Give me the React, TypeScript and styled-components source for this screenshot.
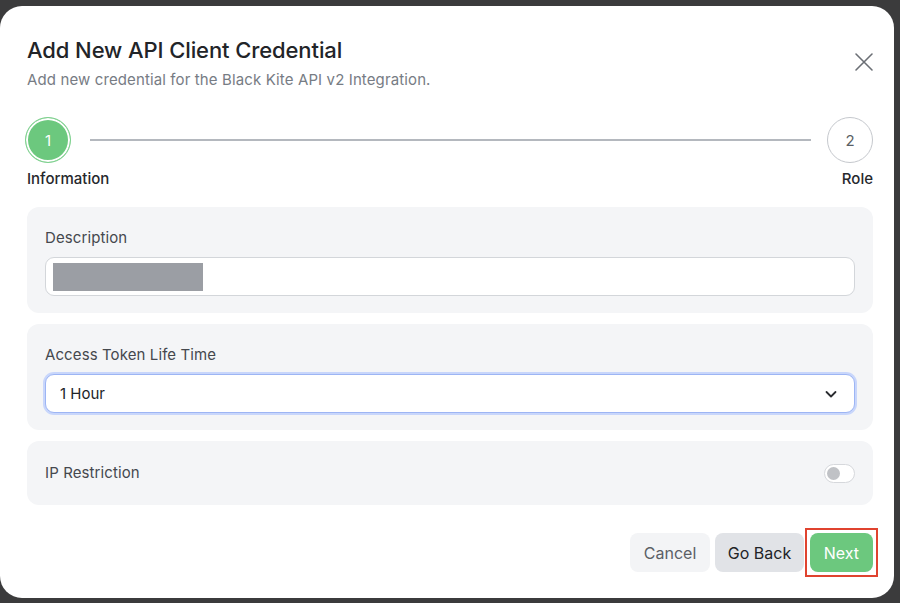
import styled, { createGlobalStyle } from "styled-components";

const GlobalStyle = createGlobalStyle`
  html, body {
    margin: 0;
    padding: 0;
    background: #3b3b3c;
  }
  body {
    font-family: Inter, "Noto Sans", sans-serif;
    width: 900px;
    height: 603px;
    overflow: hidden;
  }
`;

const Modal = styled.div`
  margin-top: 6px;
  width: 894px;
  height: 592px;
  box-sizing: border-box;
  background: #fff;
  border-radius: 22px;
  padding: 30px 21px 0 27px;
  display: flex;
  flex-direction: column;
`;

const Header = styled.div`
  display: flex;
  justify-content: space-between;
  align-items: flex-start;
`;

const Title = styled.h1`
  margin: 0;
  font-size: 22px;
  font-weight: 500;
  color: #222428;
  line-height: 28px;
  letter-spacing: -0.1px;
`;

const Subtitle = styled.p`
  margin: 6px 0 0;
  font-size: 15px;
  color: #777c84;
  line-height: 20px;
  letter-spacing: 0.12px;
`;

const CloseButton = styled.button`
  border: none;
  background: none;
  padding: 0;
  margin: 16px -1px 0 0;
  color: #6b6f75;
  display: flex;
  cursor: pointer;
`;

const Stepper = styled.div`
  margin-top: 27px;
  display: flex;
  flex-direction: column;
  gap: 6px;
`;

const StepRow = styled.div`
  display: flex;
  align-items: center;
`;

const StepCircle = styled.div<{ $active?: boolean }>`
  width: 46px;
  height: 46px;
  box-sizing: border-box;
  border-radius: 50%;
  display: flex;
  align-items: center;
  justify-content: center;
  font-size: 15px;
  flex-shrink: 0;
  ${(p) =>
    p.$active
      ? `
    margin-left: -2px;
    border: 1.5px solid #7fd18f;
    background: #6cc87e;
    color: #fff;
    box-shadow: inset 0 0 0 2px #fff;
  `
      : `
    border: 1px solid #c5c8cd;
    background: #fff;
    color: #5b5f66;
  `}
`;

const StepLine = styled.div`
  flex: 1;
  height: 2px;
  background: #b4b8be;
  margin: 0 16px 0 19px;
`;

const StepLabels = styled.div`
  display: flex;
  justify-content: space-between;
  font-size: 15px;
  font-weight: 500;
  color: #26282c;
  line-height: 20px;
`;

const Cards = styled.div`
  margin-top: 18px;
  display: flex;
  flex-direction: column;
  gap: 11px;
`;

const Card = styled.div<{ $row?: boolean }>`
  background: #f4f5f7;
  border-radius: 12px;
  padding: ${(p) => (p.$row ? "22px 18px" : "21px 18px 17px 18px")};
  display: flex;
  flex-direction: ${(p) => (p.$row ? "row" : "column")};
  justify-content: ${(p) => (p.$row ? "space-between" : "flex-start")};
  align-items: ${(p) => (p.$row ? "center" : "stretch")};
`;

const Label = styled.label`
  font-size: 15px;
  color: #45484e;
  line-height: 20px;
  letter-spacing: 0.1px;
`;

const InputBox = styled.div`
  margin-top: 9px;
  height: 39px;
  box-sizing: border-box;
  background: #fff;
  border: 1.5px solid #d3d6da;
  border-radius: 9px;
  padding: 4px 7px;
  display: flex;
  align-items: center;
`;

const Redacted = styled.div`
  width: 150px;
  height: 28px;
  background: #9b9ea4;
`;

const Select = styled.div`
  margin-top: 9px;
  height: 39px;
  box-sizing: border-box;
  background: #fff;
  border: 1.5px solid #9db5f4;
  box-shadow: 0 0 0 2px #c8d6fb;
  border-radius: 9px;
  padding: 0 16px 0 14px;
  display: flex;
  align-items: center;
  justify-content: space-between;
  font-size: 15px;
  color: #222428;
`;

const Toggle = styled.div`
  width: 31px;
  height: 19px;
  box-sizing: border-box;
  border-radius: 10px;
  border: 1px solid #d6d8dc;
  background: #fff;
  padding: 2px;
  display: flex;
  align-items: center;
  &::after {
    content: "";
    width: 13px;
    height: 13px;
    border-radius: 50%;
    background: #c0c2c6;
  }
`;

const Footer = styled.div`
  margin-top: 28px;
  display: flex;
  justify-content: flex-end;
  gap: 5px;
`;

const Button = styled.button<{ $variant: "ghost" | "secondary" | "primary" }>`
  height: 39px;
  border: none;
  border-radius: 8px;
  font-family: inherit;
  font-size: 16px;
  padding: 0 ${(p) => (p.$variant === "secondary" ? "12.5px" : "14px")};
  cursor: pointer;
  background: ${(p) =>
    p.$variant === "primary" ? "#6cc87e" : p.$variant === "secondary" ? "#e1e3e7" : "#f3f4f6"};
  color: ${(p) =>
    p.$variant === "primary" ? "#fff" : p.$variant === "secondary" ? "#222428" : "#5b5f66"};
`;

const Highlight = styled.div`
  outline: 2px solid #e0432f;
  outline-offset: 3px;
  display: flex;
  margin-left: 1px;
`;

export default function App() {
  return (
    <>
      <GlobalStyle />
      <Modal>
        <Header>
          <div>
            <Title>Add New API Client Credential</Title>
            <Subtitle>Add new credential for the Black Kite API v2 Integration.</Subtitle>
          </div>
          <CloseButton aria-label="Close">
            <svg width="20" height="20" viewBox="0 0 20 20" fill="none" stroke="currentColor" strokeWidth="1.6" strokeLinecap="round">
              <path d="M2 2l16 16M18 2L2 18" />
            </svg>
          </CloseButton>
        </Header>

        <Stepper>
          <StepRow>
            <StepCircle $active>1</StepCircle>
            <StepLine />
            <StepCircle>2</StepCircle>
          </StepRow>
          <StepLabels>
            <span>Information</span>
            <span>Role</span>
          </StepLabels>
        </Stepper>

        <Cards>
          <Card>
            <Label>Description</Label>
            <InputBox>
              <Redacted />
            </InputBox>
          </Card>
          <Card>
            <Label>Access Token Life Time</Label>
            <Select>
              <span>1 Hour</span>
              <svg width="14" height="14" viewBox="0 0 14 14" fill="none" stroke="#2a2c30" strokeWidth="1.8" strokeLinecap="round" strokeLinejoin="round">
                <path d="M2.5 5l4.5 4.5L11.5 5" />
              </svg>
            </Select>
          </Card>
          <Card $row>
            <Label>IP Restriction</Label>
            <Toggle />
          </Card>
        </Cards>

        <Footer>
          <Button $variant="ghost">Cancel</Button>
          <Button $variant="secondary">Go Back</Button>
          <Highlight>
            <Button $variant="primary">Next</Button>
          </Highlight>
        </Footer>
      </Modal>
    </>
  );
}
